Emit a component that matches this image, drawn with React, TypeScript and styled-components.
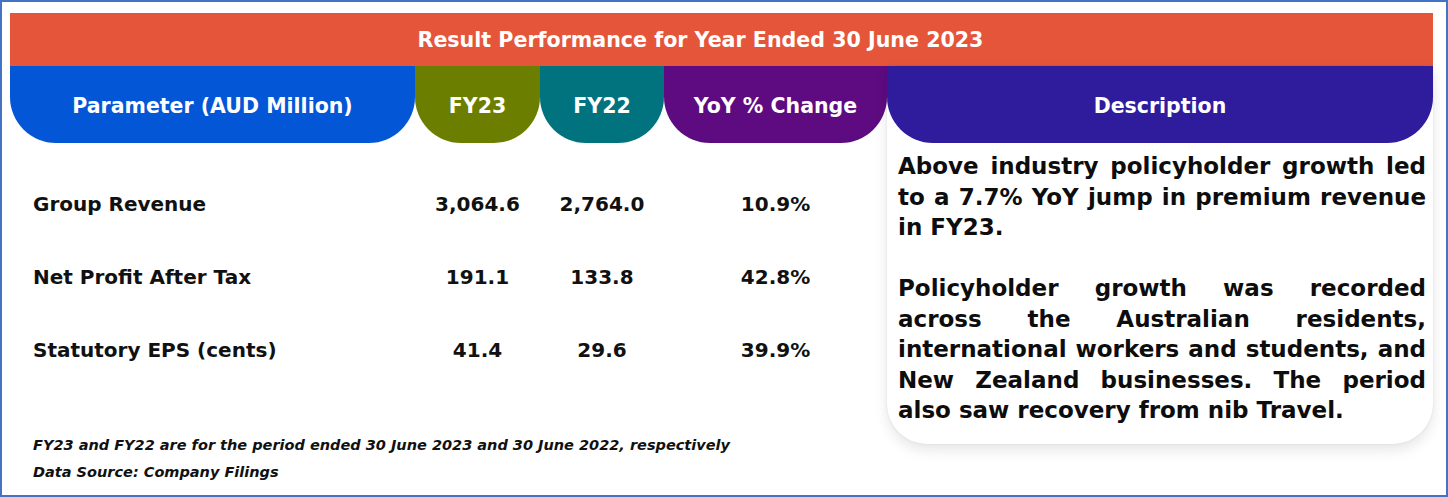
import React from "react";
import styled, { createGlobalStyle } from "styled-components";

const Global = createGlobalStyle`
  html, body { margin: 0; padding: 0; background: #ffffff; }
  * { box-sizing: border-box; }
`;

const FONT = `"DejaVu Sans", "Liberation Sans", sans-serif`;

const Frame = styled.div`
  width: 1448px;
  height: 497px;
  border: 2px solid #4472c4;
  padding: 11px 13px 0 8px;
  background: #ffffff;
  font-family: ${FONT};
  overflow: hidden;
`;

const TitleBar = styled.div`
  height: 53px;
  background: #e5553a;
  color: #ffffff;
  font-size: 20.6px;
  font-weight: 700;
  display: flex;
  align-items: center;
  justify-content: center;
  padding-right: 42px;
`;

const Body = styled.div`
  display: flex;
  align-items: flex-start;
`;

const Left = styled.div`
  width: 877px;
  display: flex;
  flex-direction: column;
`;

const Columns = `405px 125px 124px 223px`;

const HeaderRow = styled.div`
  display: grid;
  grid-template-columns: ${Columns};
`;

const Pill = styled.div<{ $bg: string }>`
  height: 77px;
  background: ${(p) => p.$bg};
  border-radius: 0 0 46px 46px;
  color: #ffffff;
  font-size: 20.5px;
  font-weight: 700;
  display: flex;
  align-items: center;
  justify-content: center;
  padding-top: 3px;
`;

const Rows = styled.div`
  margin-top: 24px;
  display: grid;
  grid-template-columns: ${Columns};
  grid-auto-rows: 73px;
  align-items: center;
  color: #111111;
  font-size: 20px;
  font-weight: 700;
`;

const Label = styled.div`
  padding-left: 23px;
`;

const Num = styled.div`
  text-align: center;
`;

const Notes = styled.div`
  margin-top: 46px;
  padding-left: 23px;
  font-size: 14.5px;
  font-weight: 700;
  font-style: italic;
  line-height: 27px;
  color: #111111;
  white-space: nowrap;
`;

const Card = styled.div`
  width: 546px;
  background: #ffffff;
  border-radius: 0 0 40px 40px;
  box-shadow: 0 6px 14px rgba(0, 0, 0, 0.1), 0 0 3px rgba(0, 0, 0, 0.08);
`;

const CardText = styled.div`
  padding: 8px 7px 18px 11px;
  font-size: 23px;
  font-weight: 700;
  line-height: 30.5px;
  color: #0d0d0d;
  text-align: justify;
`;

const Para = styled.p`
  margin: 0;
  & + & {
    margin-top: 30.5px;
  }
`;

const rows = [
  { label: "Group Revenue", fy23: "3,064.6", fy22: "2,764.0", yoy: "10.9%" },
  { label: "Net Profit After Tax", fy23: "191.1", fy22: "133.8", yoy: "42.8%" },
  { label: "Statutory EPS (cents)", fy23: "41.4", fy22: "29.6", yoy: "39.9%" },
];

export default function App() {
  return (
    <>
      <Global />
      <Frame>
        <TitleBar>Result Performance for Year Ended 30 June 2023</TitleBar>
        <Body>
          <Left>
            <HeaderRow>
              <Pill $bg="#0356d6">Parameter (AUD Million)</Pill>
              <Pill $bg="#6b7e00">FY23</Pill>
              <Pill $bg="#00737f">FY22</Pill>
              <Pill $bg="#5e0b81">YoY % Change</Pill>
            </HeaderRow>
            <Rows>
              {rows.map((r) => (
                <React.Fragment key={r.label}>
                  <Label>{r.label}</Label>
                  <Num>{r.fy23}</Num>
                  <Num>{r.fy22}</Num>
                  <Num>{r.yoy}</Num>
                </React.Fragment>
              ))}
            </Rows>
            <Notes>
              <div>FY23 and FY22 are for the period ended 30 June 2023 and 30 June 2022, respectively</div>
              <div>Data Source: Company Filings</div>
            </Notes>
          </Left>
          <Card>
            <Pill $bg="#2f1c9c">Description</Pill>
            <CardText>
              <Para>
                Above industry policyholder growth led to a 7.7% YoY jump in premium revenue in FY23.
              </Para>
              <Para>
                Policyholder growth was recorded across the Australian residents, international workers and
                students, and New Zealand businesses. The period also saw recovery from nib Travel.
              </Para>
            </CardText>
          </Card>
        </Body>
      </Frame>
    </>
  );
}
